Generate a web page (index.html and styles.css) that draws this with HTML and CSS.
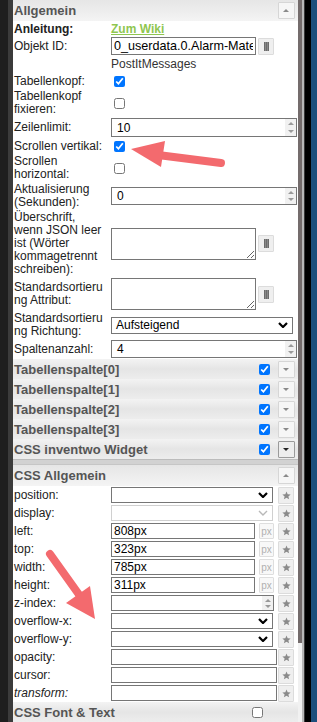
FILE: index.html
```html
<!DOCTYPE html>
<html lang="de">
<head>
    <meta charset="UTF-8">
    <meta name="viewport" content="width=device-width, initial-scale=1.0">
    <title>Widget Attribute</title>
    <link rel="stylesheet" href="styles.css">
</head>
<body>
    <div class="frame">
        <div class="edge-dark"></div>
        <div class="edge-gray"></div>

        <div class="panel">
            <div class="group-head">
                <span class="title">Allgemein</span>
                <span class="toggle up"></span>
            </div>

            <div class="row">
                <div class="label bold">Anleitung:</div>
                <div class="val"><a class="wiki" href="#">Zum Wiki</a></div>
            </div>
            <div class="row flat">
                <div class="label">Objekt ID:</div>
                <div class="val">
                    <input class="field w145 oid" type="text" value="0_userdata.0.Alarm-MatePostItMessages">
                    <span class="btn list"><i></i></span>
                </div>
            </div>
            <div class="row note">
                <div class="label"></div>
                <div class="val">PostItMessages</div>
            </div>
            <div class="row">
                <div class="label">Tabellenkopf:</div>
                <div class="val"><input type="checkbox" checked></div>
            </div>
            <div class="row">
                <div class="label">Tabellenkopf fixieren:</div>
                <div class="val"><input type="checkbox"></div>
            </div>
            <div class="row">
                <div class="label">Zeilenlimit:</div>
                <div class="val">
                    <div class="num full tall"><span>10</span><span class="spin"><b></b><b class="dn"></b></span></div>
                </div>
            </div>
            <div class="row">
                <div class="label">Scrollen vertikal:</div>
                <div class="val"><input type="checkbox" checked></div>
            </div>
            <div class="row">
                <div class="label">Scrollen horizontal:</div>
                <div class="val"><input type="checkbox"></div>
            </div>
            <div class="row">
                <div class="label">Aktualisierung (Sekunden):</div>
                <div class="val">
                    <div class="num full"><span>0</span><span class="spin"><b></b><b class="dn"></b></span></div>
                </div>
            </div>
            <div class="row">
                <div class="label">Überschrift, wenn JSON leer ist (Wörter kommagetrennt schreiben):</div>
                <div class="val">
                    <textarea class="area"></textarea>
                    <span class="btn list"><i></i></span>
                </div>
            </div>
            <div class="row">
                <div class="label">Standardsortierung Attribut:</div>
                <div class="val">
                    <textarea class="area"></textarea>
                    <span class="btn list"><i></i></span>
                </div>
            </div>
            <div class="row">
                <div class="label">Standardsortierung Richtung:</div>
                <div class="val">
                    <div class="select w182"><span>Aufsteigend</span><svg class="chev" viewBox="0 0 10 6"><polyline points="1,1 5,5 9,1"/></svg></div>
                </div>
            </div>
            <div class="row">
                <div class="label">Spaltenanzahl:</div>
                <div class="val">
                    <div class="num full"><span>4</span><span class="spin"><b></b><b class="dn"></b></span></div>
                </div>
            </div>

            <div class="sub-head"><span class="title">Tabellenspalte[0]</span><input type="checkbox" checked><span class="toggle"></span></div>
            <div class="sub-head"><span class="title">Tabellenspalte[1]</span><input type="checkbox" checked><span class="toggle"></span></div>
            <div class="sub-head"><span class="title">Tabellenspalte[2]</span><input type="checkbox" checked><span class="toggle"></span></div>
            <div class="sub-head"><span class="title">Tabellenspalte[3]</span><input type="checkbox" checked><span class="toggle"></span></div>
            <div class="sub-head"><span class="title">CSS inventwo Widget</span><input type="checkbox" checked><span class="toggle active"></span></div>
            <div class="divider"></div>

            <div class="group-head">
                <span class="title">CSS Allgemein</span>
                <span class="toggle up"></span>
            </div>

            <div class="css-row">
                <div class="label">position:</div>
                <div class="select w162"><span></span><svg class="chev" viewBox="0 0 10 6"><polyline points="1,1 5,5 9,1"/></svg></div>
                <span class="btn star"><svg viewBox="0 0 10 10"><polygon points="5,0.5 6.3,3.6 9.6,3.8 7.1,6 7.9,9.3 5,7.5 2.1,9.3 2.9,6 0.4,3.8 3.7,3.6"/></svg></span>
            </div>
            <div class="css-row">
                <div class="label">display:</div>
                <div class="select w162 off"><span></span><svg class="chev" viewBox="0 0 10 6"><polyline points="1,1 5,5 9,1"/></svg></div>
                <span class="btn star"><svg viewBox="0 0 10 10"><polygon points="5,0.5 6.3,3.6 9.6,3.8 7.1,6 7.9,9.3 5,7.5 2.1,9.3 2.9,6 0.4,3.8 3.7,3.6"/></svg></span>
            </div>
            <div class="css-row">
                <div class="label">left:</div>
                <div class="val"><input class="field w144" type="text" value="808px"><span class="btn px">px</span></div>
                <span class="btn star"><svg viewBox="0 0 10 10"><polygon points="5,0.5 6.3,3.6 9.6,3.8 7.1,6 7.9,9.3 5,7.5 2.1,9.3 2.9,6 0.4,3.8 3.7,3.6"/></svg></span>
            </div>
            <div class="css-row">
                <div class="label">top:</div>
                <div class="val"><input class="field w144" type="text" value="323px"><span class="btn px">px</span></div>
                <span class="btn star"><svg viewBox="0 0 10 10"><polygon points="5,0.5 6.3,3.6 9.6,3.8 7.1,6 7.9,9.3 5,7.5 2.1,9.3 2.9,6 0.4,3.8 3.7,3.6"/></svg></span>
            </div>
            <div class="css-row">
                <div class="label">width:</div>
                <div class="val"><input class="field w144" type="text" value="785px"><span class="btn px">px</span></div>
                <span class="btn star"><svg viewBox="0 0 10 10"><polygon points="5,0.5 6.3,3.6 9.6,3.8 7.1,6 7.9,9.3 5,7.5 2.1,9.3 2.9,6 0.4,3.8 3.7,3.6"/></svg></span>
            </div>
            <div class="css-row">
                <div class="label">height:</div>
                <div class="val"><input class="field w144" type="text" value="311px"><span class="btn px">px</span></div>
                <span class="btn star"><svg viewBox="0 0 10 10"><polygon points="5,0.5 6.3,3.6 9.6,3.8 7.1,6 7.9,9.3 5,7.5 2.1,9.3 2.9,6 0.4,3.8 3.7,3.6"/></svg></span>
            </div>
            <div class="css-row">
                <div class="label">z-index:</div>
                <div class="num w163"><span></span><span class="spin"><b></b><b class="dn"></b></span></div>
                <span class="btn star"><svg viewBox="0 0 10 10"><polygon points="5,0.5 6.3,3.6 9.6,3.8 7.1,6 7.9,9.3 5,7.5 2.1,9.3 2.9,6 0.4,3.8 3.7,3.6"/></svg></span>
            </div>
            <div class="css-row">
                <div class="label">overflow-x:</div>
                <div class="select w162"><span></span><svg class="chev" viewBox="0 0 10 6"><polyline points="1,1 5,5 9,1"/></svg></div>
                <span class="btn star"><svg viewBox="0 0 10 10"><polygon points="5,0.5 6.3,3.6 9.6,3.8 7.1,6 7.9,9.3 5,7.5 2.1,9.3 2.9,6 0.4,3.8 3.7,3.6"/></svg></span>
            </div>
            <div class="css-row">
                <div class="label">overflow-y:</div>
                <div class="select w162"><span></span><svg class="chev" viewBox="0 0 10 6"><polyline points="1,1 5,5 9,1"/></svg></div>
                <span class="btn star"><svg viewBox="0 0 10 10"><polygon points="5,0.5 6.3,3.6 9.6,3.8 7.1,6 7.9,9.3 5,7.5 2.1,9.3 2.9,6 0.4,3.8 3.7,3.6"/></svg></span>
            </div>
            <div class="css-row">
                <div class="label">opacity:</div>
                <input class="field w166" type="text">
                <span class="btn star"><svg viewBox="0 0 10 10"><polygon points="5,0.5 6.3,3.6 9.6,3.8 7.1,6 7.9,9.3 5,7.5 2.1,9.3 2.9,6 0.4,3.8 3.7,3.6"/></svg></span>
            </div>
            <div class="css-row">
                <div class="label">cursor:</div>
                <input class="field w166" type="text">
                <span class="btn star"><svg viewBox="0 0 10 10"><polygon points="5,0.5 6.3,3.6 9.6,3.8 7.1,6 7.9,9.3 5,7.5 2.1,9.3 2.9,6 0.4,3.8 3.7,3.6"/></svg></span>
            </div>
            <div class="css-row">
                <div class="label italic">transform:</div>
                <input class="field w166" type="text">
                <span class="btn star"><svg viewBox="0 0 10 10"><polygon points="5,0.5 6.3,3.6 9.6,3.8 7.1,6 7.9,9.3 5,7.5 2.1,9.3 2.9,6 0.4,3.8 3.7,3.6"/></svg></span>
            </div>

            <div class="sub-head last"><span class="title">CSS Font &amp; Text</span><input type="checkbox"></div>
        </div>

        <div class="scrollbar"><div class="thumb"></div></div>
        <div class="edge-light"></div>
        <div class="edge-line"></div>
        <div class="edge-black"></div>
        <div class="edge-blue"></div>
    </div>

    <!-- hint arrows drawn over the panel -->
    <svg class="arrows" width="317" height="722" viewBox="0 0 317 722">
        <line x1="221" y1="163" x2="158" y2="155"/>
        <polygon points="131,149 165,141 161,167"/>
        <line x1="50" y1="554" x2="80" y2="596"/>
        <polygon points="95,619 66,603 90,586"/>
    </svg>
</body>
</html>
```

FILE: styles.css
```css
* {
    box-sizing: border-box;
}
body {
    margin: 0;
    font-family: "Liberation Sans", Arial, sans-serif;
    font-size: 12px;
    color: #222;
    background: #1e1e1e;
}
.frame {
    display: flex;
    height: 722px;
    overflow: hidden;
}
.edge-dark {
    width: 8px;
    background: #1e1e1e;
}
.edge-gray {
    width: 5px;
    background: #3b3b3b;
}
.panel {
    width: 285px;
    background: #fff;
    overflow: hidden;
}
.scrollbar {
    width: 4px;
    background: #f1f1f1;
}
.thumb {
    height: 643px;
    background: #746c6c;
}
.edge-light {
    width: 2px;
    background: #b8b8b8;
}
.edge-line {
    width: 1px;
    background: #3a3a3a;
}
.edge-black {
    width: 6px;
    background: #000;
}
.edge-blue {
    width: 6px;
    background: #1c4e7c;
}

/* headers */
.group-head, .sub-head {
    display: flex;
    align-items: center;
    height: 20px;
    padding-left: 1px;
    background: linear-gradient(#f3f3f3, #e5e5e5 50%, #ededed);
}
.group-head {
    height: 21px;
    background: linear-gradient(#e6e6e6, #eeeeee 60%, #f4f4f4);
}
.title {
    font-weight: bold;
    font-size: 13px;
    color: #555;
    flex: 1;
}
.sub-head input {
    width: 11px;
    height: 11px;
    margin: 0 8px 0 0;
}
.sub-head.last {
    padding-right: 27px;
}
.toggle {
    position: relative;
    width: 17px;
    height: 17px;
    margin-right: 3px;
    border: 1px solid #d6d6d6;
    border-radius: 1px;
    background: #f6f6f6;
}
.toggle::after {
    content: "";
    position: absolute;
    left: 4px;
    top: 6px;
    border-left: 3px solid transparent;
    border-right: 3px solid transparent;
    border-top: 3px solid #8a8a8a;
}
.toggle.up::after {
    border-top: 0;
    border-bottom: 3px solid #8a8a8a;
}
.toggle.active {
    border-color: #9a9a9a;
    background: #ededed;
}
.toggle.active::after {
    border-top-color: #222;
}
.divider {
    height: 6px;
    background: #d2d2d2;
    border-top: 1px solid #bcbcbc;
    border-bottom: 1px solid #c6c6c6;
}

/* property rows */
.row {
    display: grid;
    grid-template-columns: 98px 1fr;
    align-items: center;
    min-height: 16px;
    padding: 1px 0;
}
.row.flat {
    padding: 0;
}
.row.note {
    padding: 3px 0 2px;
}
.label {
    padding: 0 4px 0 1px;
    line-height: 13px;
    overflow-wrap: anywhere;
}
.bold {
    font-weight: bold;
}
.italic {
    font-style: italic;
}
.val {
    display: flex;
    align-items: center;
    gap: 2px;
    line-height: 13px;
    color: #333;
}
.wiki {
    color: #8fc650;
    font-weight: bold;
    text-decoration: underline;
}
.row input[type="checkbox"] {
    width: 11px;
    height: 11px;
    margin: 1px 3px;
}

/* controls */
.field, .num, .select, .area {
    font: 12px "Liberation Sans", Arial, sans-serif;
    color: #000;
    height: 17px;
    border: 1px solid #767676;
    background: #fff;
    padding: 0 2px;
    margin: 0;
    outline: none;
}
.field.oid {
    height: 18px;
    font-size: 12.6px;
}
.w144 { width: 144px; }
.w145 { width: 145px; }
.w162 { width: 162px; }
.w163 { width: 163px; }
.w166 { width: 166px; }
.w182 { width: 182px; }
.full { width: 186px; }
.num {
    display: flex;
    align-items: center;
    height: 18px;
    padding: 0 0 0 5px;
}
.num.tall {
    height: 19px;
}
.num span:first-child {
    flex: 1;
}
.spin {
    display: flex;
    flex-direction: column;
    width: 11px;
    height: 100%;
    background: #f1f1f1;
}
.spin b {
    flex: 1;
    position: relative;
}
.spin b::after {
    content: "";
    position: absolute;
    left: 3px;
    top: 3px;
    border-left: 3px solid transparent;
    border-right: 3px solid transparent;
    border-bottom: 3px solid #9a9a9a;
}
.spin b.dn::after {
    top: 2px;
    border-bottom: 0;
    border-top: 3px solid #9a9a9a;
}
.select {
    display: flex;
    align-items: center;
    justify-content: space-between;
    padding: 0 4px 0 4px;
}
.chev {
    width: 10px;
    height: 6px;
    fill: none;
    stroke: #000;
    stroke-width: 2.2;
}
.select.off {
    border-color: #d0d0d0;
}
.select.off .chev {
    stroke: #b8b8b8;
    stroke-width: 1.4;
}
.area {
    width: 145px;
    height: 32px;
    resize: both;
}

.btn {
    display: flex;
    align-items: center;
    justify-content: center;
    width: 16px;
    height: 17px;
    border: 1px solid #dcdcdc;
    border-radius: 1px;
    background: #efefef;
}
.btn.list i {
    width: 5px;
    height: 9px;
    background: repeating-linear-gradient(90deg, #6c6c6c 0 1px, #8a8a8a 1px 2px);
}
.btn.px {
    width: 15px;
    height: 16px;
    margin-left: 2px;
    background: #f8f8f8;
    border-color: #dedede;
    color: #b0b0b0;
    font-size: 10px;
}
.btn.star svg {
    width: 9px;
    height: 9px;
    fill: #8a8a8a;
}

.css-row {
    display: grid;
    grid-template-columns: 98px 167px 16px;
    align-items: center;
    height: 18px;
}
.css-row .label {
    line-height: 13px;
}
.css-row .field, .css-row .select, .css-row .num {
    height: 16px;
}
.css-row .btn.star {
    height: 17px;
}

/* hint arrows */
.arrows {
    position: absolute;
    left: 0;
    top: 0;
    pointer-events: none;
}
.arrows line {
    stroke: #f36a6e;
    stroke-width: 8;
    stroke-linecap: round;
}
.arrows polygon {
    fill: #f36a6e;
}
```
